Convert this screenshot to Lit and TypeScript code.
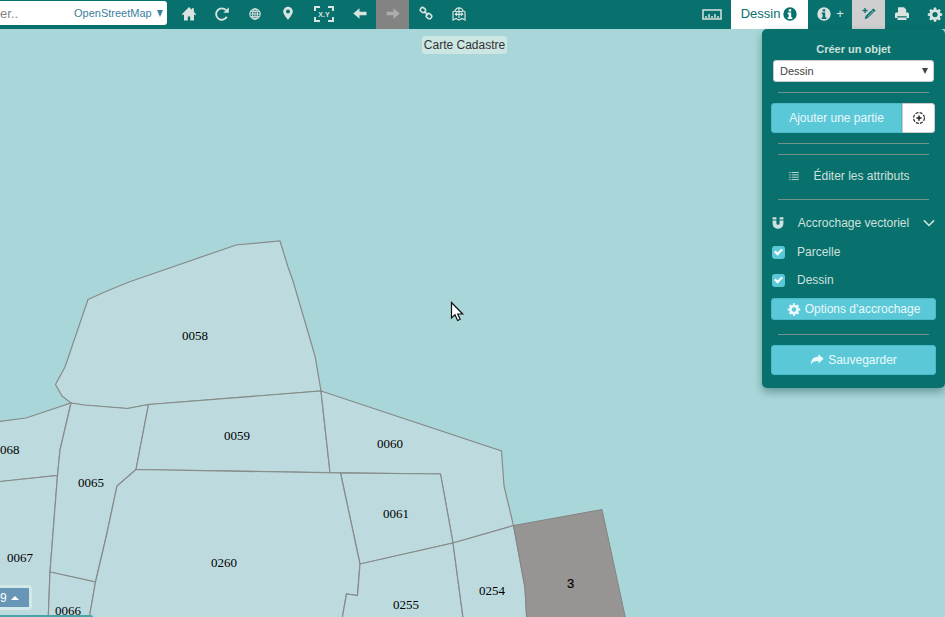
import { LitElement, html, css, svg } from "lit";
import { customElement, property, state } from "lit/decorators.js";

const drawings = {
  home: svg`<path d="M8 1 0.8 8.200l1 1L3 8.200V14.500h3.800V10.500h2.400v4H13V8.200l1.200 1 1-1L12.900 5.900V2.300h-2v1.500z"/>`,
  refresh: svg`<path d="M12.800 10.800A5.700 5.700 0 1 1 12 4.200" fill="none" stroke="currentColor" stroke-width="1.900"/><path d="M14.800 1.300v5.500H9.300z"/>`,
  globe: svg`<g fill="none" stroke="currentColor" stroke-width="1.100"><circle cx="8" cy="8" r="5.200"/><ellipse cx="8" cy="8" rx="2.400" ry="5.200"/><path d="M2.800 8h10.400M8 2.800v10.400M3.700 5.400h8.600M3.700 10.600h8.600" stroke-width=".9"/></g>`,
  pin: svg`<path fill-rule="evenodd" d="M8 .8a4.800 4.800 0 0 0-4.800 4.800c0 1.800.8 2.900 1.800 4.300C6.300 11.600 7 12.400 8 13.900c1-1.500 1.700-2.300 2.900-4 1-1.400 1.900-2.500 1.900-4.300A4.800 4.800 0 0 0 8 .8zm0 2.700a2 2 0 1 1 0 4 2 2 0 0 1 0-4z"/>`,
  left: svg`<path d="M1.300 7.500 7.500 2.300v3.500h7v3.400h-7v3.500z"/>`,
  right: svg`<path d="M14.700 7.500 8.500 2.300v3.500h-7v3.400h7v3.500z"/>`,
  link: svg`<g fill="none" stroke="currentColor" stroke-width="1.600"><rect x="2.300" y="1.900" width="5.200" height="4.400" rx="2" transform="rotate(38 4.900 4.100)"/><rect x="8.300" y="7.900" width="5.400" height="4.600" rx="2" transform="rotate(38 11 10.200)"/><path d="m6 5.300 4 3.800"/></g>`,
  folded: svg`<g fill="none" stroke="currentColor" stroke-width="1.200"><path d="M2 5.500V14l3-1.600 3 1.600 3-1.600 3 1.600V5.500M2 5.700 4 4.800M14 5.700l-2-.9M4 5.800a4 4 0 0 1 8 0M8 1.800V12M4.500 8.300h7M4.500 5.600h7"/></g><path d="M3.300 8.300 6 6.300v4zM12.700 8.300 10 6.300v4z"/>`,
  info: svg`<path fill-rule="evenodd" d="M8 1.300a6.700 6.700 0 1 0 0 13.400A6.700 6.700 0 0 0 8 1.300zM6.700 3.200h2.500v2.200H6.700zM5.700 6.500h3.500v4.700h1.100V13H5.700v-1.800h1V8.200h-1z"/>`,
  pencil: svg`<path d="M12.300 2.500 14.600 4.600l-7.700 7.500-3.200 1.200.9-3.300z"/><path d="M4 2v5M1.500 4.500h5" stroke="currentColor" stroke-width="1.300"/><path d="m10.500 4.300 2.200 2.100M6.500 10.800l5-4.900" stroke="#cfcfcf" stroke-width=".8"/>`,
  print: svg`<path fill-rule="evenodd" d="M4 1.300h6l2.200 2.200v3h1.200c1 0 1.600.6 1.600 1.600v4h-2.500V14h-9v-1.900H1V8.100c0-1 .6-1.600 1.600-1.600H4zm-.8 8.900V11.500h9.600v-1.300z"/>`,
  gear: svg`<path fill-rule="evenodd" d="m6.900 1.500h2.200l.4 1.900 1.100.5 1.700-1 1.500 1.500-1 1.700.5 1 1.900.4v2.200l-1.900.4-.5 1.100 1 1.700-1.500 1.500-1.700-1-1.100.4-.4 1.900H6.900l-.4-1.900-1.100-.4-1.700 1-1.500-1.500 1-1.700-.5-1.100L.8 9.700V7.500l1.900-.4.500-1-1-1.700 1.500-1.500 1.700 1 1.100-.5zM8 6a2.600 2.600 0 1 0 0 5.200A2.600 2.600 0 0 0 8 6z"/>`,
  target: svg`<circle cx="8" cy="8" r="6.200" fill="none" stroke="currentColor" stroke-width="1.300" stroke-dasharray="3.400 1.470"/><path d="M8 5v6M5 8h6" stroke="currentColor" stroke-width="1.700"/>`,
  list: svg`<path d="M2.500 4h1.600M2.500 6.700h1.600M2.500 9.400h1.600M2.500 12.100h1.600M5.300 4h8.200M5.300 6.700h8.200M5.300 9.400h8.200M5.300 12.100h8.200" stroke="currentColor" stroke-width="1"/>`,
  magnet: svg`<path d="M1.800 1.500h4.400v2.600H1.800zM9.800 1.500h4.400v2.600H9.800zM1.800 5.200h4.400v3a1.800 1.800 0 0 0 3.600 0v-3h4.400v3.300a6.200 6.200 0 0 1-12.400 0z"/>`,
  chevron: svg`<path d="m2.200 5 5.800 5.800L13.800 5" fill="none" stroke="currentColor" stroke-width="1.800"/>`,
  share: svg`<path d="M15.500 6.600 9.700 1.300v3.100C4.200 4.400 1.300 7 1 13.500c1.900-3.500 4-4.500 8.700-4.500v3z"/>`,
};

type IconName = keyof typeof drawings;

@customElement("map-icon")
export class MapIcon extends LitElement {
  @property() name: IconName = "home";

  static styles = css`
    :host {
      display: inline-flex;
      width: 16px;
      height: 16px;
      flex: none;
    }
    svg {
      width: 100%;
      height: 100%;
      fill: currentColor;
    }
  `;

  render() {
    return html`<svg viewBox="0 0 16 16" aria-hidden="true">${drawings[this.name]}</svg>`;
  }
}

@customElement("top-bar")
export class TopBar extends LitElement {
  static styles = css`
    :host {
      display: flex;
      height: 29px;
      background: #08706d;
      color: #d9e3e0;
      font: 13px "Liberation Sans", Arial, sans-serif;
    }
    .search {
      display: flex;
      align-items: center;
      width: 167px;
      height: 24px;
      margin: 1px 5px 0 0;
      padding-right: 4px;
      box-sizing: border-box;
      background: #fff;
      border-radius: 0 3px 3px 0;
      color: #3a81a0;
    }
    input {
      flex: 1;
      min-width: 0;
      padding: 0;
      border: 0;
      background: none;
      font: inherit;
    }
    input::placeholder {
      color: #858585;
    }
    select {
      appearance: none;
      padding: 0;
      border: 0;
      background: none;
      color: inherit;
      font: 11px "Liberation Sans", Arial, sans-serif;
    }
    .caret {
      width: 6px;
      height: 7px;
      margin-left: 5px;
      fill: currentColor;
    }
    .tools {
      display: flex;
      flex: 1;
    }
    .end {
      justify-content: flex-end;
    }
    button {
      display: flex;
      align-items: center;
      justify-content: center;
      width: 33px;
      height: 29px;
      padding: 0 0 2px;
      border: 0;
      background: none;
      color: inherit;
      font: inherit;
    }
    .wide {
      width: 39px;
    }
    .bracket {
      width: 20px;
      height: 16px;
      fill: none;
      stroke: currentColor;
      stroke-width: 2;
    }
    .coords {
      fill: currentColor;
      stroke: none;
      font: bold 7px "Liberation Sans", Arial, sans-serif;
    }
    button:disabled {
      background: #838383;
      color: #adadad;
    }
    .tab {
      width: 77px;
      gap: 2px;
      background: #fff;
      color: #08706d;
    }
    .more {
      width: 44px;
      gap: 4px;
    }
    .active {
      background: #cfcfcf;
      color: #08706d;
    }
    .edge {
      width: 27px;
      padding-left: 6px;
    }
  `;

  private tool(name: IconName, label: string, cls = "", disabled = false) {
    return html`<button class=${cls} aria-label=${label} ?disabled=${disabled}>
      <map-icon name=${name}></map-icon>
    </button>`;
  }

  render() {
    return html`
      <div class="search">
        <input type="text" placeholder="er.." aria-label="Rechercher" />
        <select aria-label="Source"><option>OpenStreetMap</option></select>
        <svg class="caret" viewBox="0 0 6 7"><path d="M0 0h6L3 7z" /></svg>
      </div>
      <div class="tools">
        ${this.tool("home", "Accueil")} ${this.tool("refresh", "Actualiser")}
        ${this.tool("globe", "Vue globale")} ${this.tool("pin", "Localiser")}
        <button class="wide" aria-label="Coordonnées">
          <svg class="bracket" viewBox="0 0 20 16">
            <path d="M6 1H1v4M14 1h5v4M1 11v4h5M19 11v4h-5" />
            <text class="coords" x="10" y="11" text-anchor="middle">X.Y</text>
          </svg>
        </button>
        ${this.tool("left", "Vue précédente")}
        ${this.tool("right", "Vue suivante", "", true)}
        ${this.tool("link", "Lien")} ${this.tool("folded", "Cartes")}
      </div>
      <div class="tools end">
        <button class="wide" aria-label="Mesurer">
          <svg class="bracket" viewBox="0 0 20 16">
            <path d="M1 4h18v9H1z" stroke-width="1.500" />
            <path d="M4 12V10M7 12V8M10 12V10M13 12V8M16 12V10" stroke-width="1.500" />
          </svg>
        </button>
        <button class="tab">Dessin <map-icon name="info"></map-icon></button>
        <button class="more"><map-icon name="info"></map-icon> +</button>
        ${this.tool("pencil", "Éditer", "active")} ${this.tool("print", "Imprimer")}
        ${this.tool("gear", "Paramètres", "edge")}
      </div>
    `;
  }
}

@customElement("edit-panel")
export class EditPanel extends LitElement {
  @state() private layers = ["Parcelle", "Dessin"];

  static styles = css`
    :host {
      display: flex;
      flex-direction: column;
      width: 183px;
      box-sizing: border-box;
      padding: 10px 9px 13px;
      background: #08706d;
      border-radius: 5px;
      box-shadow: 0 4px 8px rgba(0, 60, 60, 0.4);
      color: #cfe1de;
      font: 12px "Liberation Sans", Arial, sans-serif;
    }
    h2 {
      margin: 0 0 1px;
      font-size: 11px;
      line-height: 20px;
      text-align: center;
    }
    .choice {
      display: grid;
      align-items: center;
      margin: 0 2px;
      color: #444;
    }
    select {
      grid-area: 1 / 1;
      appearance: none;
      height: 22px;
      padding: 0 6px;
      border: 1px solid #ccc;
      border-radius: 3px;
      background: #fff;
      color: inherit;
      font: 11px "Liberation Sans", Arial, sans-serif;
    }
    .caret {
      grid-area: 1 / 1;
      justify-self: end;
      width: 6px;
      height: 6px;
      margin-right: 6px;
      fill: currentColor;
      pointer-events: none;
    }
    hr {
      width: 151px;
      height: 1px;
      margin: 10px auto;
      border: 0;
      background: #75918e;
    }
    .joined {
      margin-top: 0;
    }
    .pair {
      display: flex;
      margin-right: 1px;
    }
    button {
      display: flex;
      align-items: center;
      justify-content: center;
      gap: 4px;
      height: 30px;
      padding: 0;
      border: 1px solid #4bb9c9;
      border-radius: 3px;
      background: #5bc8d8;
      color: #e9fafb;
      font: inherit;
    }
    map-icon {
      width: 14px;
      height: 14px;
    }
    .add {
      flex: 1;
      border-radius: 3px 0 0 3px;
    }
    .place {
      width: 33px;
      border-color: #ccc;
      border-radius: 0 3px 3px 0;
      background: #fff;
      color: #222;
    }
    .plain {
      border: 0;
      background: none;
      color: inherit;
    }
    .attributes {
      height: 22px;
      margin-bottom: 2px;
      gap: 12px;
      padding-right: 10px;
    }
    .snapping {
      justify-content: space-between;
      height: 26px;
      margin-bottom: 2px;
    }
    .layer {
      display: flex;
      align-items: center;
      gap: 12px;
      height: 28px;
    }
    input {
      display: grid;
      place-items: center;
      appearance: none;
      width: 13px;
      height: 13px;
      margin: 0 0 0 1px;
      border-radius: 3px;
      background: #5bc8d8;
    }
    input:checked::before {
      content: "";
      width: 9px;
      height: 8px;
      background: #fff;
      clip-path: polygon(0 50%, 18% 32%, 38% 56%, 82% 8%, 100% 26%, 38% 96%);
    }
    .options {
      height: 22px;
      margin: 4px 0;
    }
  `;

  render() {
    return html`
      <h2>Créer un objet</h2>
      <div class="choice">
        <select aria-label="Créer un objet"><option>Dessin</option></select>
        <svg class="caret" viewBox="0 0 6 6"><path d="M0 0h6L3 6z" /></svg>
      </div>
      <hr />
      <div class="pair">
        <button class="add">Ajouter une partie</button>
        <button class="place" aria-label="Placer"><map-icon name="target"></map-icon></button>
      </div>
      <hr />
      <hr class="joined" />
      <button class="plain attributes"><map-icon name="list"></map-icon>Éditer les attributs</button>
      <hr />
      <button class="plain snapping">
        <map-icon name="magnet"></map-icon>Accrochage vectoriel<map-icon name="chevron"></map-icon>
      </button>
      ${this.layers.map(
        (name) => html`<label class="layer"><input type="checkbox" checked />${name}</label>`
      )}
      <button class="options"><map-icon name="gear"></map-icon>Options d'accrochage</button>
      <hr />
      <button><map-icon name="share"></map-icon>Sauvegarder</button>
    `;
  }
}

const parcels = [
  "M88 299.500 107 291 129 282 236 245 280 241 288 267 293 281 315 356 321 391 148.500 404.500 127.500 408.500 84 405 71 403 62 396 55.500 384.500 65 367z",
  "M-5 422 26 418 71 403 60 450 57.500 475.500-5 482z",
  "M-5 482 57.500 475.500 50 572 48 625H-5z",
  "M71 403 84 405 127.500 408.500 148.500 404.500 136 469.500 117 486 107 533 95.500 582 50 572 57.500 475.500 60 450z",
  "M50 572 95.500 582 88 625H48z",
  "M148.500 404.500 321 391 330 472.500 136 469.500z",
  "M321 391 501.500 451 504 486 513.500 525.500 453 543 440.500 474 330 472.500z",
  "M340.500 473 440.500 474 453 543 360 564z",
  "M136 469.500 340.500 473 360 564 357.500 595.500 346.500 594 341 625H88L95.500 582 107 533 117 486z",
  "M360 564 453 543 464 625H341L346.500 594 357.500 595.500z",
  "M453 543 513.500 525.500 525 588 527 625H464z",
];

const labels: [string, number, number][] = [
  ["0058", 182, 340],
  ["0059", 224, 440],
  ["0060", 377, 448],
  ["0061", 383, 518],
  ["0065", 78, 487],
  ["0066", 55, 615],
  ["0067", 7, 562],
  ["068", 0, 454],
  ["0254", 479, 595],
  ["0255", 393, 609],
  ["0260", 211, 567],
];

@customElement("cadastre-map")
export class CadastreMap extends LitElement {
  static styles = css`
    :host {
      display: block;
      overflow: hidden;
      background: #a9d7d9;
    }
    svg {
      display: block;
      width: 100%;
      height: 100%;
    }
    .parcel {
      fill: #bddbdf;
      stroke: #878b8a;
      stroke-width: 1.200;
    }
    .drawn {
      fill: #969593;
      stroke: #858583;
    }
    .label {
      font: 13px "Liberation Serif", serif;
    }
    .drawn-label {
      font: 13px "Liberation Sans", sans-serif;
      stroke: #000;
      stroke-width: 0.200;
    }
    .pointer {
      fill: #fff;
      stroke: #111;
      stroke-width: 1.200;
    }
  `;

  render() {
    return html`<svg role="img" aria-label="Carte Cadastre">
      ${parcels.map((d) => svg`<path class="parcel" d=${d} />`)}
      <path class="drawn" d="M513.500 525.500 602 509.500 627 625H527L525 588z" />
      ${labels.map(([name, x, y]) => svg`<text class="label" x=${x} y=${y}>${name}</text>`)}
      <text class="drawn-label" x="567" y="588">3</text>
      <path class="pointer" d="M451.500 302.500v15.500l3.500-3.200 2.600 5.700 2.600-1.200-2.500-5.300h5z" />
    </svg>`;
  }
}

@customElement("app-root")
export class AppRoot extends LitElement {
  static styles = css`
    :host {
      display: grid;
      grid-template: auto 1fr / 1fr;
      position: relative;
      height: 100vh;
      overflow: hidden;
      font: 12px "Liberation Sans", Arial, sans-serif;
    }
    cadastre-map {
      grid-area: 1 / 1 / 3 / 2;
      min-height: 0;
    }
    top-bar {
      grid-area: 1 / 1;
      z-index: 1;
    }
    edit-panel {
      grid-area: 2 / 1;
      place-self: start end;
      z-index: 1;
    }
    .title {
      grid-area: 2 / 1;
      place-self: start center;
      margin: 7px 16px 0 0;
      padding: 0 2px;
      border-radius: 3px;
      background: #cbe6e3;
      color: #333;
      font-size: 12px;
      font-weight: normal;
      line-height: 18px;
    }
    .scale {
      position: absolute;
      left: 0;
      bottom: 7px;
      display: flex;
      align-items: center;
      gap: 4px;
      height: 25px;
      padding: 0 10px 0 0;
      border: 3px solid #d3e8e8;
      border-left: 0;
      border-radius: 0 4px 4px 0;
      background: #6896b7;
      color: #fff;
      font: inherit;
    }
    .up {
      width: 8px;
      height: 4px;
      fill: currentColor;
    }
    .progress {
      position: absolute;
      left: 0;
      bottom: 0;
      width: 93px;
      height: 2px;
      border-radius: 0 2px 0 0;
      background: #48a5a7;
    }
  `;

  render() {
    return html`
      <cadastre-map></cadastre-map>
      <top-bar></top-bar>
      <h1 class="title">Carte Cadastre</h1>
      <edit-panel></edit-panel>
      <button class="scale">9 <svg class="up" viewBox="0 0 8 4"><path d="M0 4h8L4 0z" /></svg></button>
      <div class="progress"></div>
    `;
  }
}
